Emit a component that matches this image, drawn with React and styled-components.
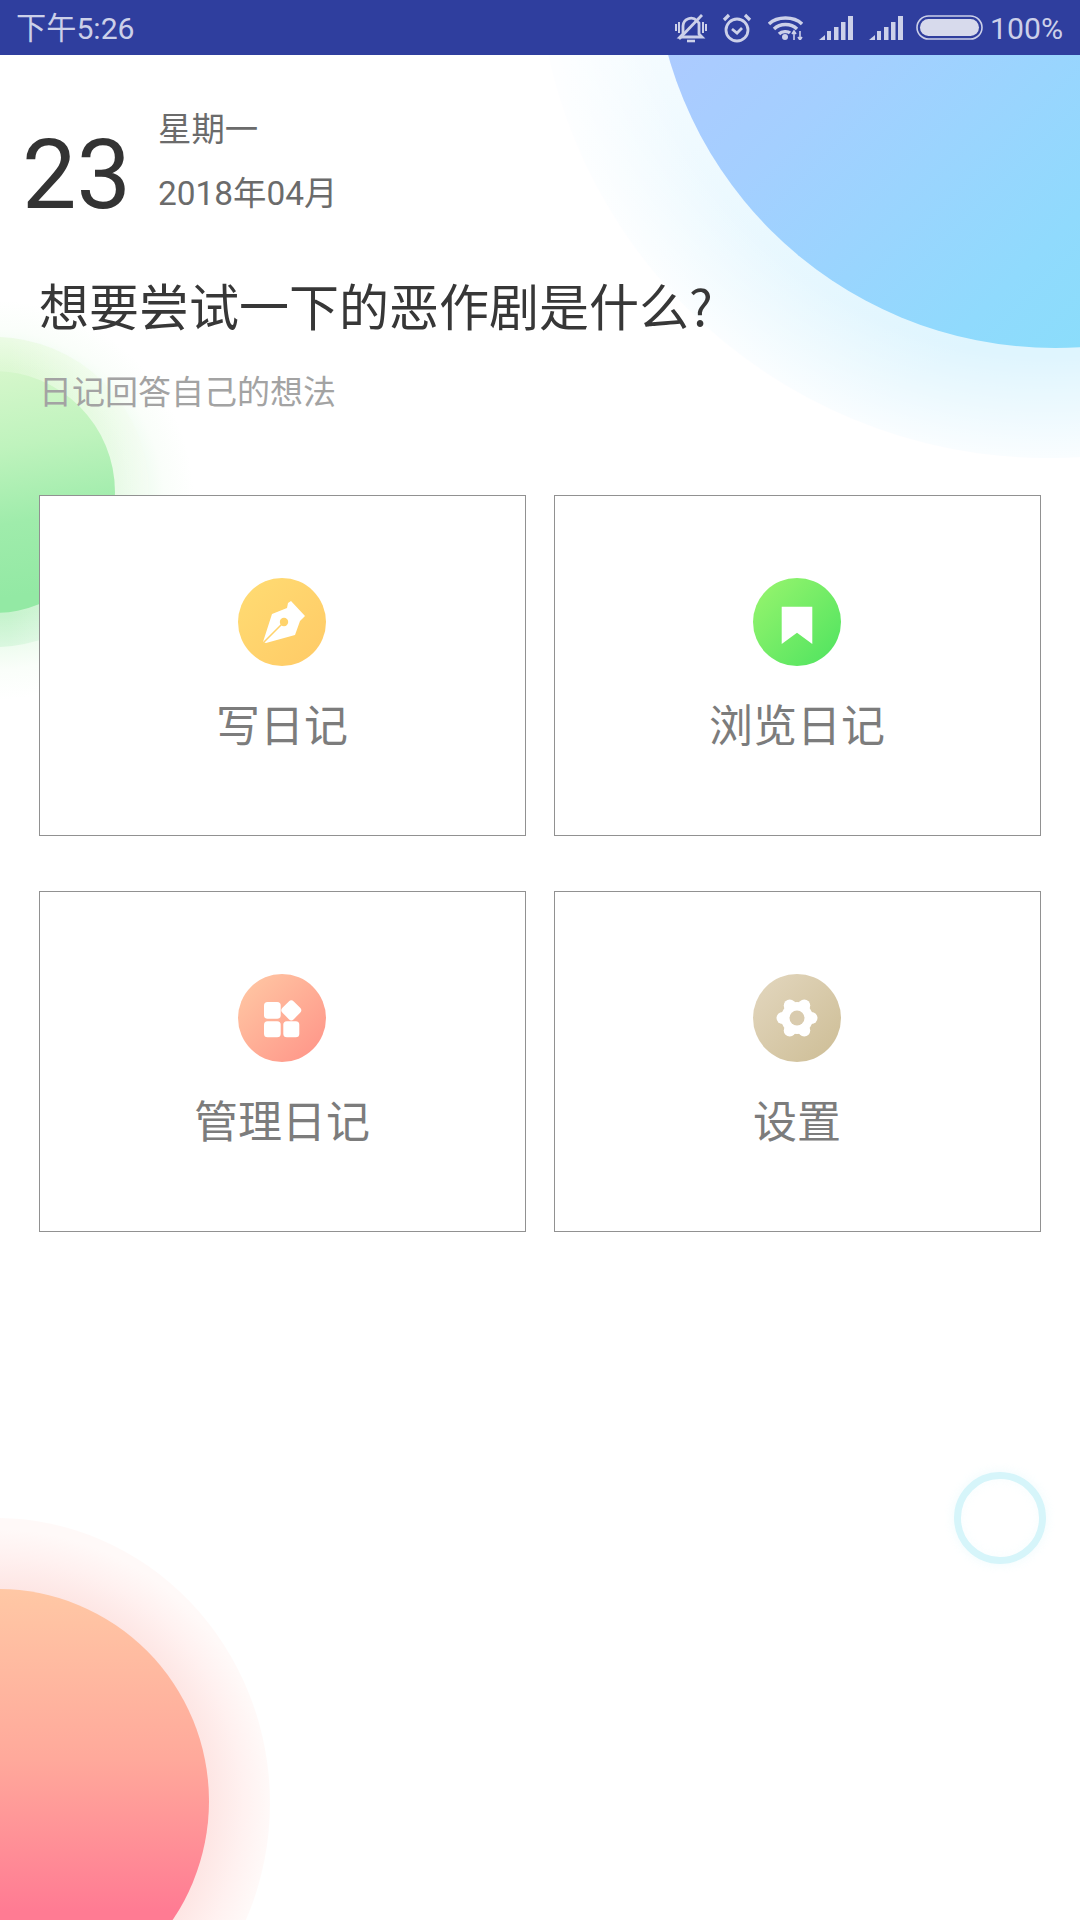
import React from "react";
import styled, { createGlobalStyle } from "styled-components";

const Global = createGlobalStyle`
  html, body { margin: 0; padding: 0; background: #fff; }
  * { box-sizing: border-box; }
`;

const FONT = `Roboto, "Noto Sans CJK SC", sans-serif`;

const Page = styled.div`
  position: relative;
  width: 1080px;
  height: 1920px;
  overflow: hidden;
  background: #fff;
  font-family: ${FONT};
`;

const Circle = styled.div`
  position: absolute;
  border-radius: 50%;
  pointer-events: none;
`;

const BlueHalo = styled(Circle)`
  left: 537px; top: -566px; width: 1024px; height: 1024px;
  background:
    radial-gradient(circle closest-side, rgba(255,255,255,0) 80%, rgba(255,255,255,.82) 100%),
    linear-gradient(150deg, #f6fcff 40%, #dff5fe 72%);
`;
const BlueDisc = styled(Circle)`
  left: 653px; top: -456px; width: 804px; height: 804px;
  background: linear-gradient(135deg, #aecaff 30%, #a4cfff 45%, #90dafd 68%, #86e0f9 85%);
`;
const GreenGlow = styled(Circle)`
  left: -206px; top: 300px; width: 400px; height: 400px;
  background: radial-gradient(circle closest-side, rgba(215,248,218,.5) 70%, rgba(240,252,240,.35) 85%, rgba(255,255,255,0) 100%);
`;
const GreenHalo = styled(Circle)`
  left: -161px; top: 337px; width: 310px; height: 310px;
  background:
    radial-gradient(circle closest-side, rgba(255,255,255,0) 80%, rgba(255,255,255,.4) 100%),
    linear-gradient(90deg, rgba(255,255,255,0) 55%, rgba(255,255,255,.55) 100%),
    linear-gradient(180deg, #dff9d4 0%, #d8f7d6 50%, #c2f2cb 100%);
`;
const GreenDisc = styled(Circle)`
  left: -127px; top: 371px; width: 242px; height: 242px;
  background: linear-gradient(170deg, #dcf8cf 0%, #bff3bd 35%, #9fecab 62%, #93e9a4 88%);
`;
const PinkHalo = styled(Circle)`
  left: -278px; top: 1518px; width: 548px; height: 570px;
  background: radial-gradient(circle closest-side, #fde4e2 76%, #fff1f0 90%, #fff9f8 100%);
`;
const PinkDisc = styled(Circle)`
  left: -213px; top: 1589px; width: 422px; height: 424px;
  background: linear-gradient(180deg, #ffc8a5 0%, #ffa99b 40%, #ff7b93 76%);
`;
const Ring = styled(Circle)`
  left: 954px; top: 1472px; width: 92px; height: 92px;
  border: 7px solid #d6f5fa;
  box-shadow: 0 0 12px rgba(214,245,250,.4), inset 0 0 12px rgba(214,245,250,.2);
`;

const StatusBar = styled.div`
  position: relative;
  height: 55px;
  background: #2f3e9e;
  color: #ccd0e9;
  display: flex;
  align-items: center;
  justify-content: space-between;
  padding: 2px 17px 0 16px;
  font-size: 30.2px;
  line-height: 53px;
`;
const StatusIcons = styled.div`
  display: flex;
  align-items: center;
  margin-top: -2px;
`;
const StatusIcon = styled.svg`
  display: block;
  flex: none;
  margin-left: ${p => p.$gap}px;
`;
const Percent = styled.span`
  margin-left: 7px;
  padding-top: 2px;
`;

const Content = styled.main`
  position: relative;
  padding-top: 55px;
`;
const DateRow = styled.div`
  display: flex;
  align-items: flex-start;
  padding-left: 22px;
`;
const Day = styled.div`
  margin-top: 16px;
  width: 109px;
  font-size: 97px;
  line-height: 98px;
  font-weight: 400;
  color: #333;
`;
const DateMeta = styled.div`
  margin-left: 27px;
  display: flex;
  flex-direction: column;
  gap: 24px;
  font-size: 33.4px;
  line-height: 40px;
  color: #6b6b6b;
`;
const Title = styled.h1`
  margin: 50px 0 0 39px;
  font-family: "Noto Sans CJK SC", Roboto, sans-serif;
  font-size: 50px;
  line-height: 60px;
  font-weight: 400;
  color: #373737;
`;
const Subtitle = styled.p`
  margin: 37px 0 0 39px;
  font-size: 33px;
  line-height: 44px;
  color: #a3a3a3;
`;
const Grid = styled.div`
  display: grid;
  grid-template-columns: 487px 487px;
  grid-auto-rows: 341px;
  column-gap: 28px;
  row-gap: 55px;
  margin: 80px 0 0 39px;
`;
const Card = styled.div`
  display: flex;
  flex-direction: column;
  align-items: center;
  padding: 82px 1px 0 0;
  background: #fff;
  border: 1px solid #919191;
`;
const Badge = styled.div`
  width: 88px;
  height: 88px;
  border-radius: 50%;
  background: linear-gradient(135deg, ${p => p.$from}, ${p => p.$to});
`;
const BadgeIcon = styled.svg`
  display: block;
`;
const CardLabel = styled.div`
  margin-top: 31px;
  font-size: 44px;
  line-height: 60px;
  color: #7c7c7c;
`;

const Pen = () => (
  <BadgeIcon width="88" height="88" viewBox="0 0 88 88">
    <path fill="#fff" d="M25 64 L34 36 L49 30 L50 25 L53 23 L67 38 L64 41 L62 43 L57 57 L28 65 Z" />
    <path stroke="#ffd36c" strokeWidth="1.6" d="M24 66 L45 45" />
    <circle cx="46" cy="44" r="4.2" fill="#ffd36c" />
  </BadgeIcon>
);
const Bookmark = () => (
  <BadgeIcon width="88" height="88" viewBox="0 0 88 88">
    <path fill="#fff" d="M28.7 28.7 H59.3 V66 L44 54.7 L28.7 66 Z" />
  </BadgeIcon>
);
const Apps = () => (
  <BadgeIcon width="88" height="88" viewBox="0 0 88 88">
    <g fill="#fff">
      <rect x="26" y="28" width="16.7" height="16.7" rx="3.5" />
      <rect x="26" y="47.3" width="16.7" height="16" rx="3.5" />
      <rect x="45.3" y="47.3" width="16" height="16" rx="3.5" />
      <rect x="45.3" y="28.3" width="16" height="16" rx="3.5" transform="rotate(45 53.3 36.3)" />
    </g>
  </BadgeIcon>
);
const Gear = () => (
  <BadgeIcon width="88" height="88" viewBox="0 0 88 88">
    <g fill="#fff">
      <circle cx="44" cy="44" r="16" />
      {[0, 60, 120, 180, 240, 300].map(a => (
        <circle key={a} cx={44 + 14.5 * Math.cos((a * Math.PI) / 180)} cy={44 + 14.5 * Math.sin((a * Math.PI) / 180)} r="6" />
      ))}
    </g>
    <circle cx="44" cy="44" r="7.5" fill="#d9cbae" />
  </BadgeIcon>
);

const Signal = ({ gap }) => (
  <StatusIcon $gap={gap} width="34" height="24" viewBox="0 0 34 24" fill="#ccd0e9">
    <path d="M0 24 L6 19 V24 Z" />
    <rect x="8" y="15" width="4" height="9" />
    <rect x="15" y="11" width="4.5" height="13" />
    <rect x="22" y="6" width="4.5" height="18" />
    <rect x="29" y="0" width="5" height="24" />
  </StatusIcon>
);

const items = [
  { label: "写日记", from: "#ffdc73", to: "#ffca66", Icon: Pen },
  { label: "浏览日记", from: "#9af56e", to: "#4de35f", Icon: Bookmark },
  { label: "管理日记", from: "#ffcaa5", to: "#ff9287", Icon: Apps },
  { label: "设置", from: "#e3d7bf", to: "#cdbd95", Icon: Gear },
];

export default function App() {
  return (
    <Page>
      <Global />
      <BlueHalo />
      <BlueDisc />
      <GreenGlow />
      <GreenHalo />
      <GreenDisc />
      <PinkHalo />
      <PinkDisc />
      <Ring />
      <StatusBar>
        <span>下午5:26</span>
        <StatusIcons>
          <StatusIcon $gap={0} width="32" height="30" viewBox="0 0 32 30" fill="none" stroke="#ccd0e9" strokeWidth="2.8">
            <path d="M8 21 V13 a8 8 0 0 1 14 -5 L24 10 V21 L27 24 H5 Z" />
            <path d="M4 26 L27 2" />
            <path d="M12 28 H20" strokeWidth="2.6" />
            <path d="M1 11 V18 M4 9 V20 M28 9 V20 M31 11 V18" strokeWidth="2" />
          </StatusIcon>
          <StatusIcon $gap={15} width="30" height="30" viewBox="0 0 30 30" fill="none" stroke="#ccd0e9" strokeWidth="2.8">
            <circle cx="15" cy="17" r="11" />
            <path d="M10 16 L15 20 L20 15" />
            <path d="M2 7 L7 2 M23 2 L28 7" strokeWidth="3.2" />
          </StatusIcon>
          <StatusIcon $gap={16} width="35" height="24" viewBox="0 0 35 24" fill="none" stroke="#ccd0e9" strokeWidth="3.4">
            <path d="M1 8 C9 0 26 0 34 8" />
            <path d="M6 13 C12 7 23 7 29 13" />
            <path d="M11 18 C14 15 20 15 22 17" />
            <circle cx="17" cy="21" r="3" fill="#ccd0e9" stroke="none" />
            <path d="M26 15 V24 M32 15 V24 M24 18 L26 15 L28 18 M30 21 L32 24 L34 21" strokeWidth="1.6" />
          </StatusIcon>
          <Signal gap={16} />
          <Signal gap={16} />
          <StatusIcon $gap={13} width="67" height="25" viewBox="0 0 67 25">
            <rect x="1" y="1" width="65" height="23" rx="11.5" fill="none" stroke="#ccd0e9" strokeWidth="1.6" />
            <rect x="4" y="4" width="59" height="17" rx="8.5" fill="#d7daec" />
          </StatusIcon>
          <Percent>100%</Percent>
        </StatusIcons>
      </StatusBar>
      <Content>
        <DateRow>
          <Day>23</Day>
          <DateMeta>
            <span>星期一</span>
            <span>2018年04月</span>
          </DateMeta>
        </DateRow>
        <Title>想要尝试一下的恶作剧是什么?</Title>
        <Subtitle>日记回答自己的想法</Subtitle>
        <Grid>
          {items.map(({ label, from, to, Icon }) => (
            <Card key={label}>
              <Badge $from={from} $to={to}>
                <Icon />
              </Badge>
              <CardLabel>{label}</CardLabel>
            </Card>
          ))}
        </Grid>
      </Content>
    </Page>
  );
}
